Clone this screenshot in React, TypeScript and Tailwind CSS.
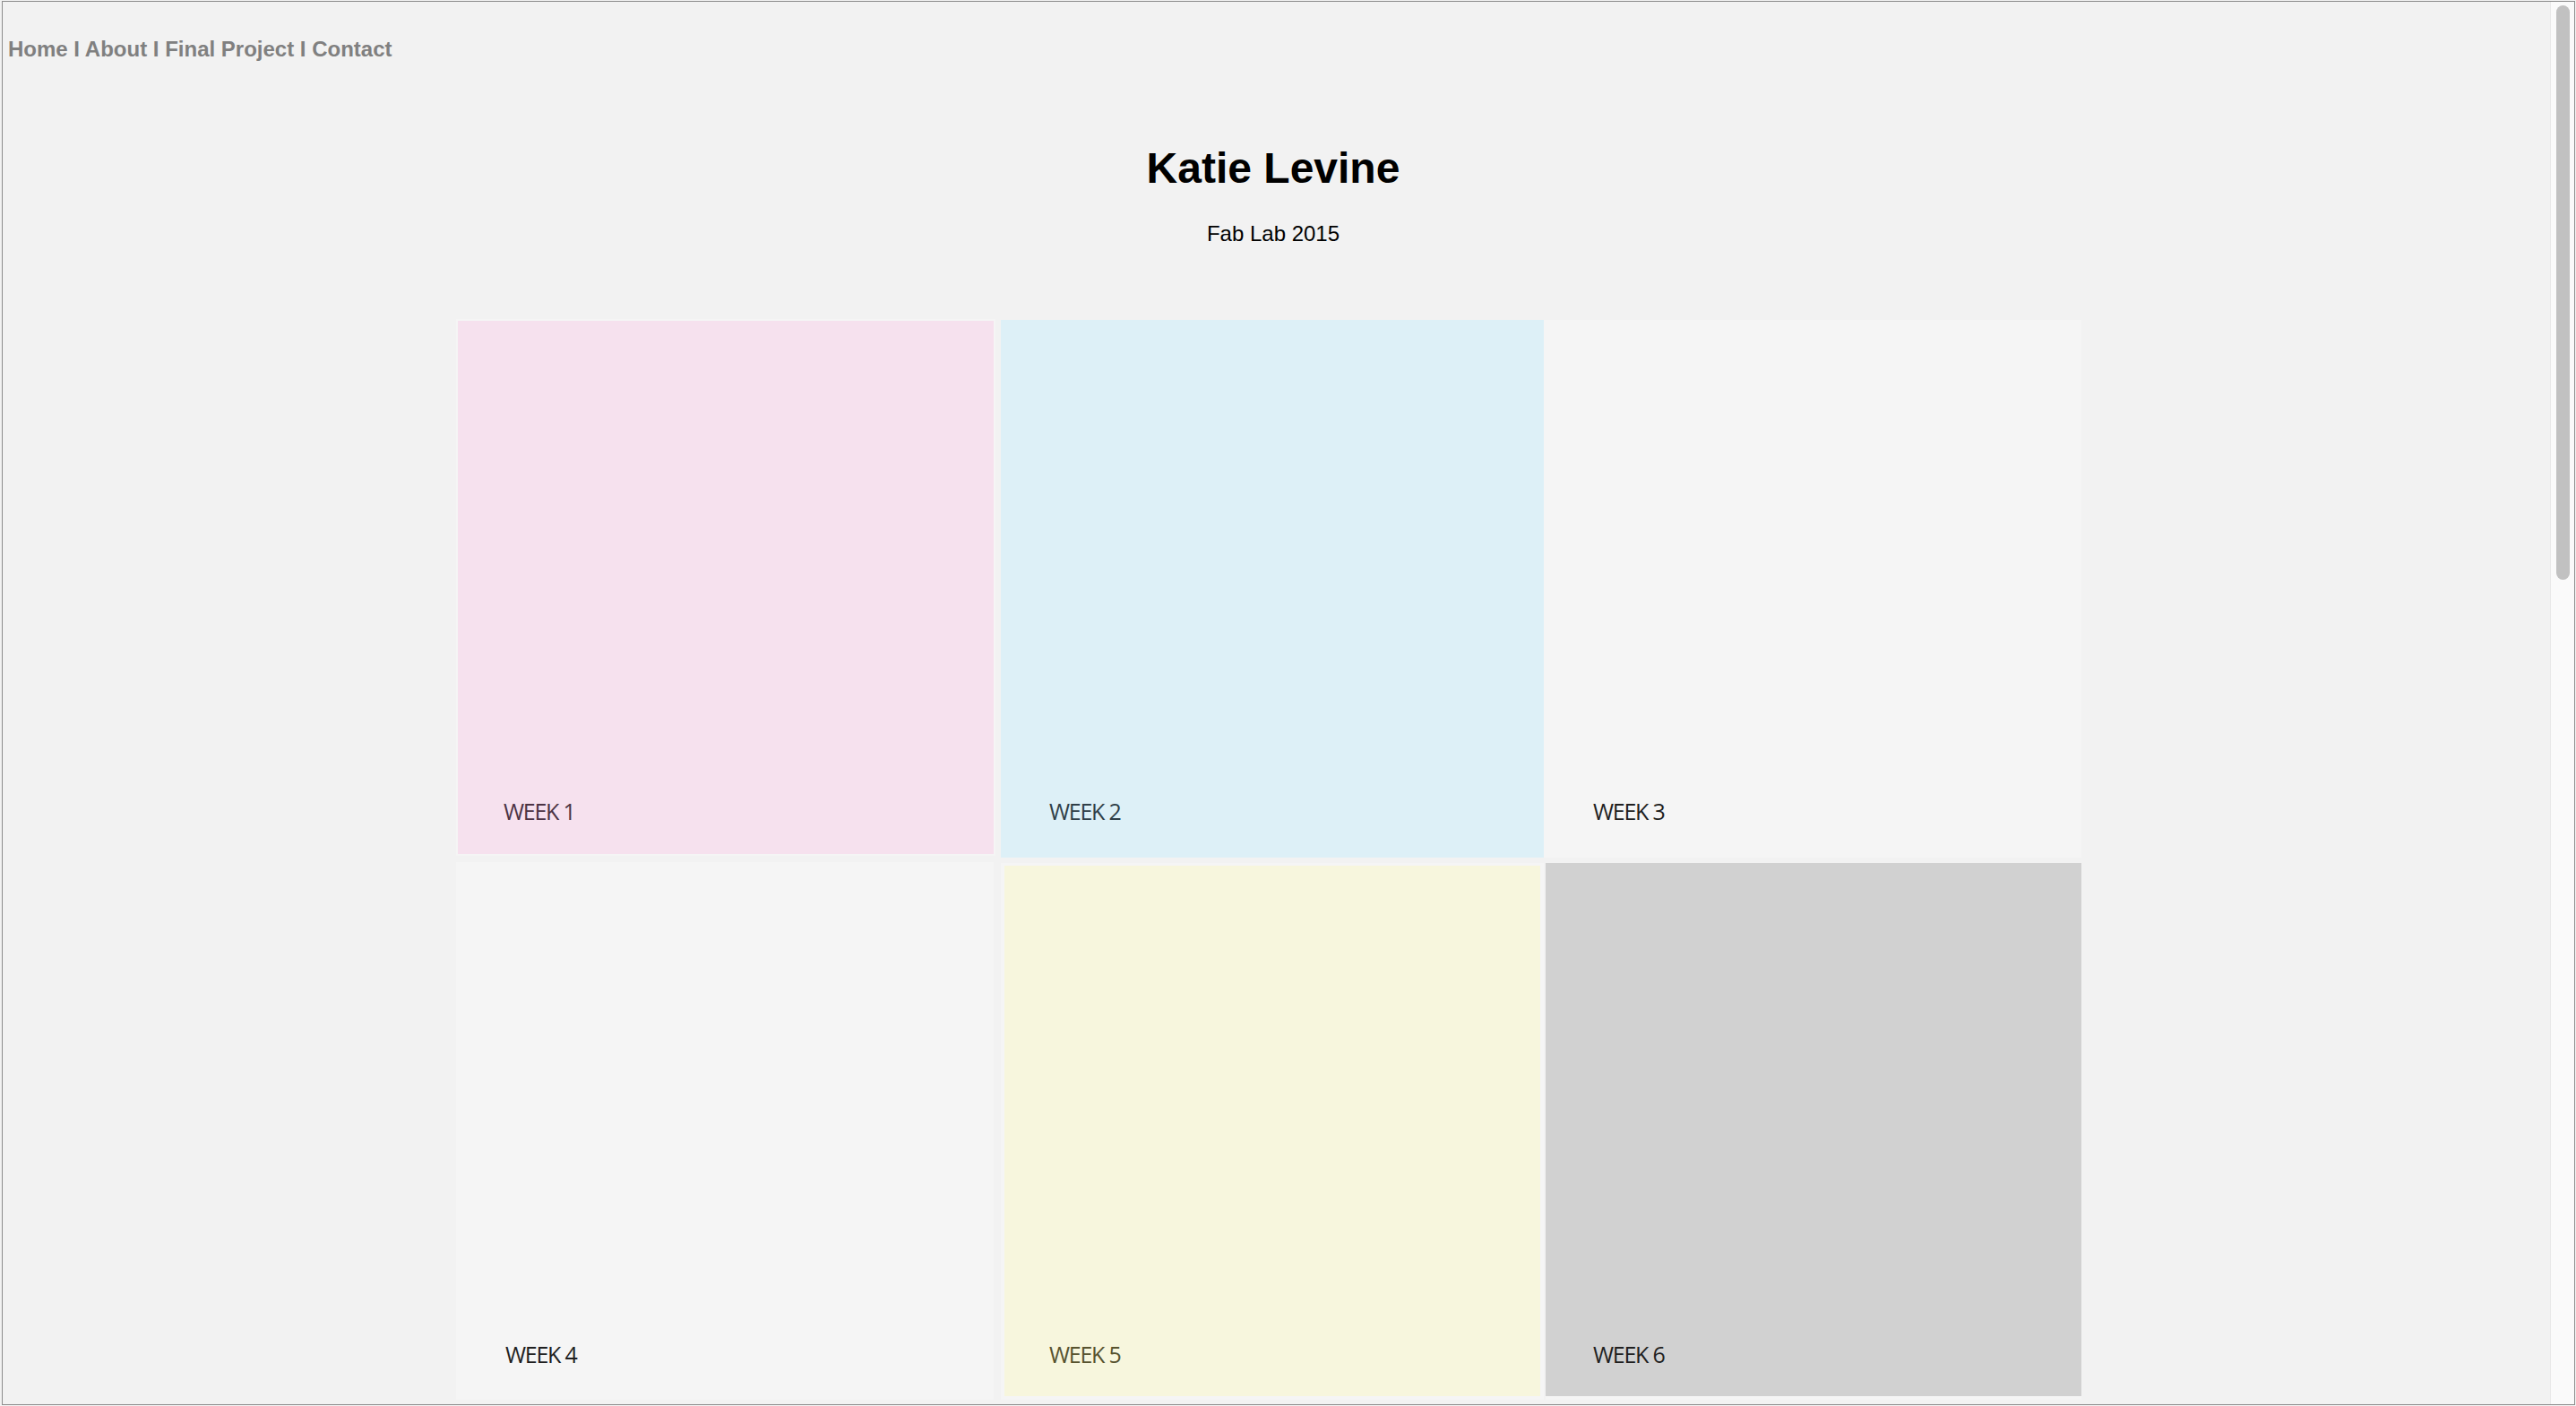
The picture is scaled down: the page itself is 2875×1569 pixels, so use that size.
import React from 'react';

interface Tile {
  label: string;
  box: string;
  text: string;
}

// two rows of week tiles, sizes taken from the screenshot
const rowOne: Tile[] = [
  { label: 'WEEK 1', box: 'w-[602px] h-[599px] border-[2px] border-[#f5f5f5] bg-[#f6e1ee] pt-[535px] pl-[51px]', text: 'text-[#4b3343]' },
  { label: 'WEEK 2', box: 'ml-[6px] mt-[1px] w-[606px] h-[600px] bg-[#ddf0f7] pt-[536px] pl-[54px]', text: 'text-[#2f3f48]' },
  { label: 'WEEK 3', box: 'mt-[1px] w-[600px] h-[600px] bg-[#f5f5f5] pt-[536px] pl-[55px]', text: 'text-[#1f1f1f]' },
];

const rowTwo: Tile[] = [
  { label: 'WEEK 4', box: 'w-[600px] h-[600px] bg-[#f5f5f5] pt-[537px] pl-[55px]', text: 'text-[#1f1f1f]' },
  { label: 'WEEK 5', box: 'ml-[8px] mt-[1px] w-[606px] h-[599px] border-[4px] border-t-[3px] border-[#f5f5f5] bg-[#f7f6dd] pt-[533px] pl-[50px]', text: 'text-[#57532f]' },
  { label: 'WEEK 6', box: 'ml-[2px] mt-[1px] w-[598px] h-[599px] border-b-[4px] border-[#f5f5f5] bg-[#d1d1d1] pt-[536px] pl-[53px]', text: 'text-[#1f1f1f]' },
];

function WeekTile({ tile }: { tile: Tile }) {
  return (
    <div className={`box-border shrink-0 ${tile.box}`}>
      <span
        className={`block text-[25px] leading-none tracking-[-0.05em] ${tile.text}`}
        style={{ fontFamily: '"Open Sans", "Noto Sans", sans-serif' }}
      >
        {tile.label}
      </span>
    </div>
  );
}

export default function App() {
  return (
    <div className="h-screen w-screen overflow-hidden bg-[#f2f2f2] pl-[2px] pt-[1px] pr-[1px] pb-[1px]">
      <div className="flex h-full overflow-hidden border border-[#8d8d8d]">
        {/* Page */}
        <div
          className="flex-1 overflow-hidden"
          style={{ fontFamily: '"Liberation Sans", Arial, sans-serif' }}
        >
          <nav className="mt-[39px] h-[28px] pl-[6px] text-[24px] font-bold leading-[28px] text-[#808080]">
            <a href="#">Home</a> I <a href="#">About</a> I <a href="#">Final Project</a> I <a href="#">Contact</a>
          </nav>

          <header className="pr-[7px] text-center">
            <h1 className="mt-[91px] h-[55px] text-[48px] font-bold leading-[55px] text-black">Katie Levine</h1>
            <p className="mt-[33px] h-[26px] text-[24px] leading-[26px] text-black">Fab Lab 2015</p>
          </header>

          <div className="ml-[506px] mt-[82px]">
            <div className="flex items-start">
              {rowOne.map((t) => (
                <WeekTile key={t.label} tile={t} />
              ))}
            </div>
            <div className="mt-[5px] flex items-start">
              {rowTwo.map((t) => (
                <WeekTile key={t.label} tile={t} />
              ))}
            </div>
          </div>
        </div>

        {/* Scrollbar */}
        <div className="w-[27px] shrink-0 border-l border-[#e8e8e8] bg-[#fafafa] pl-[6px] pt-[4px]">
          <div className="h-[641px] w-[15px] rounded-full bg-[#c1c1c1]" />
        </div>
      </div>
    </div>
  );
}
